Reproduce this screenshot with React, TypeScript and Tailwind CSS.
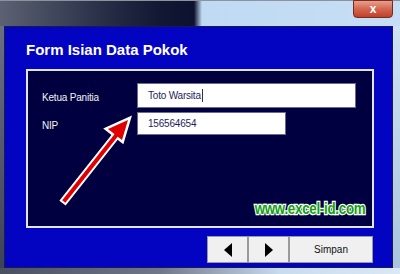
import React from "react";

const ui = { fontFamily: '"Liberation Sans", Arial, sans-serif' };

function Arrow() {
  // red annotation arrow with a white outline, drawn over the panel
  return (
    <svg
      className="absolute left-0 top-0"
      width="348"
      height="159"
      viewBox="0 0 348 159"
      aria-hidden="true"
    >
      <g strokeLinecap="square" strokeLinejoin="miter">
        <line x1="37" y1="129" x2="90" y2="62" stroke="#ffffff" strokeWidth="8" />
        <polygon points="100,49 80,58 94,69" fill="#ffffff" stroke="#ffffff" strokeWidth="5" />
        <line x1="37" y1="129" x2="90" y2="62" stroke="#e00000" strokeWidth="4" />
        <polygon points="100,49 80,58 94,69" fill="#e00000" />
      </g>
    </svg>
  );
}

function NavButton({ dir }: { dir: "left" | "right" }) {
  return (
    <button className="flex h-full w-[41px] items-center justify-center border border-[#9a9a9a] bg-[#f0f0f0]">
      <svg width="8" height="14" viewBox="0 0 8 14">
        {dir === "left" ? (
          <polygon points="8,0 0,7 8,14" fill="#000" />
        ) : (
          <polygon points="0,0 8,7 0,14" fill="#000" />
        )}
      </svg>
    </button>
  );
}

export default function App() {
  return (
    <div className="relative h-[274px] w-[400px] overflow-hidden bg-[#c9dcee]" style={ui}>
      {/* title bar */}
      <div className="relative h-[26px] w-full border-t border-[#8d929c] bg-[linear-gradient(90deg,#5c6272_0%,#2a3048_25%,#121733_40%,#0d1230_48%,#0d1230_48.5%,#c0daf3_50.5%,#c6def5_100%)]">
        <div className="absolute right-[7px] top-[-1px] flex h-[18px] w-[40px] items-center justify-center rounded-b-[4px] border border-[#7a2a1e] bg-[linear-gradient(180deg,#e7a08f_0%,#d4664f_50%,#c0402a_100%)] text-[12px] font-bold leading-none text-white">
          x
        </div>
      </div>

      <div className="flex h-[242px]">
        <div className="w-[4px] bg-[linear-gradient(180deg,#6a707e,#3d4356)]" />

        {/* blue client area */}
        <div className="flex w-[389px] flex-col border border-[#1a1a50] bg-[#0303c2] pl-[21px]">
          <h1 className="mt-[14px] h-[28px] text-[15px] font-bold leading-[18px] text-white">
            Form Isian Data Pokok
          </h1>

          <div className="relative h-[159px] w-[348px] border-2 border-[#e4e4ee] bg-[#000040]">
            <Arrow />
            <div className="relative grid grid-cols-[95px_auto] items-center gap-y-[4px] pl-[14px] pt-[12px] text-[10px] tracking-[-0.2px] text-[#f2f2f2]">
              <span className="pt-[4px]">Ketua Panitia</span>
              <div className="flex h-[25px] w-[219px] items-center border border-[#6a6a8a] bg-white pl-[10px] text-[#1e1e5a]">
                Toto Warsita
                <span className="ml-px h-[13px] w-px bg-[#333]" />
              </div>
              <span className="pt-[4px]">NIP</span>
              <div className="flex h-[23px] w-[149px] items-center border border-[#6a6a8a] bg-white pl-[10px] text-[#1e1e5a]">
                156564654
              </div>
            </div>

            <div
              className="absolute bottom-[9px] right-[7px] origin-right scale-x-[0.83] text-[16px] font-bold leading-none tracking-[-0.3px] text-[#10a010]"
              style={{ WebkitTextStroke: "2.5px #ffffff", paintOrder: "stroke fill" }}
            >
              www.excel-id.com
            </div>
          </div>

          {/* button row */}
          <div className="mr-[19px] mt-[8px] flex h-[27px] justify-end">
            <NavButton dir="left" />
            <NavButton dir="right" />
            <button className="h-full w-[84px] border border-[#9a9a9a] bg-[#f0f0f0] text-[10px] text-[#111]">
              Simpan
            </button>
          </div>
        </div>

        <div className="w-[7px] bg-[linear-gradient(180deg,#cfe2f4,#a9c4de)]" />
      </div>

      {/* bottom frame */}
      <div className="h-[6px] bg-[linear-gradient(90deg,#4a5060_0%,#6f7788_40%,#c8dcef_70%,#dbe8f5_100%)]" />
    </div>
  );
}
